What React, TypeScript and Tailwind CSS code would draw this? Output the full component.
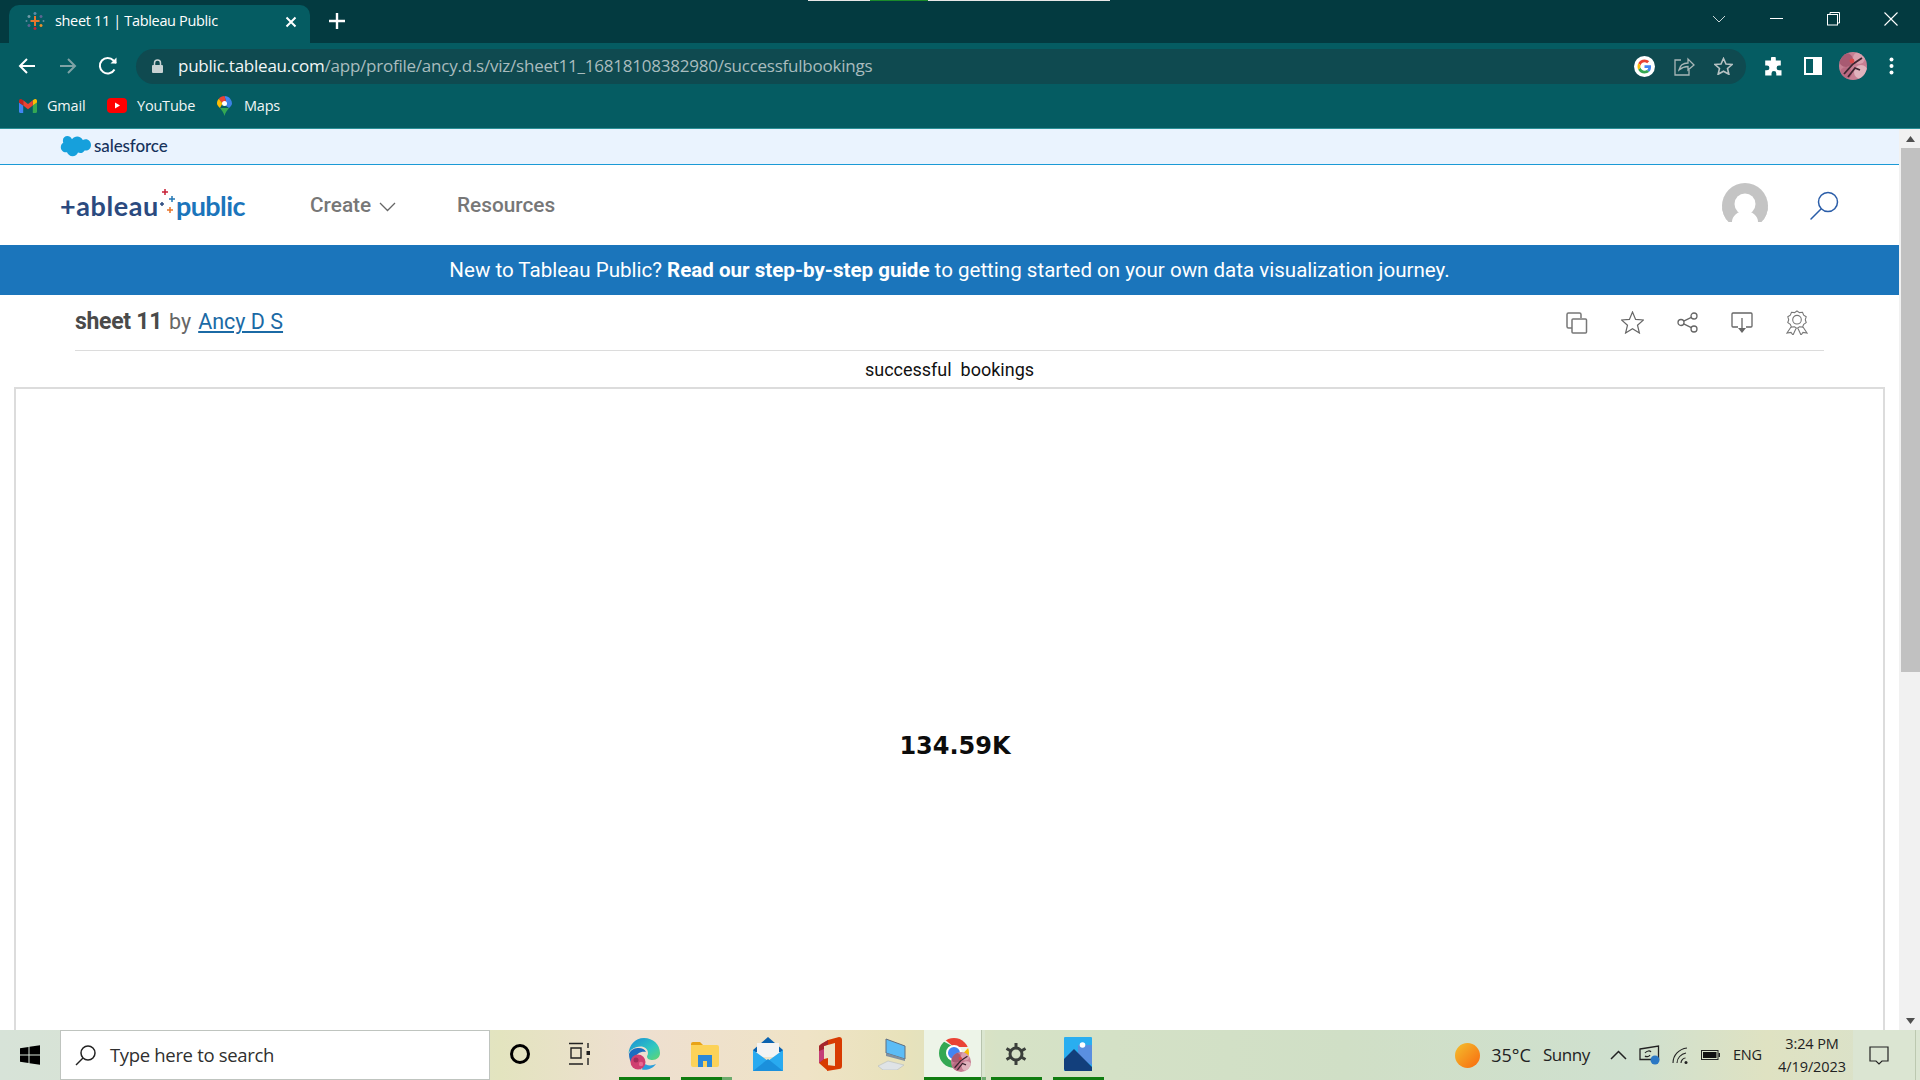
import React from "react";

const seg = "font-['Open_Sans',sans-serif]";

function Favicon() {
  return (
    <svg width="20" height="20" viewBox="0 0 20 20" fill="none" strokeWidth="1.6">
      <path d="M10 5v10M5.500 10h9" stroke="#e8762d" strokeWidth="2" />
      <path d="M10 1v3M8.500 2.500h3" stroke="#5b8aa8" />
      <path d="M10 16v3M8.500 17.500h3" stroke="#c72037" />
      <path d="M4 4v3M2.500 5.500h3" stroke="#7099a6" />
      <path d="M16 4v3M14.500 5.500h3" stroke="#5b6591" />
      <path d="M4 13v3M2.500 14.500h3" stroke="#5b6591" />
      <path d="M16 13v3M14.500 14.500h3" stroke="#eb912b" />
      <path d="M1.500 9v2M18.500 9v2" stroke="#59879b" />
    </svg>
  );
}

function GoogleG({ size = 20 }: { size?: number }) {
  return (
    <svg width={size} height={size} viewBox="0 0 48 48">
      <circle cx="24" cy="24" r="24" fill="#fff" />
      <g transform="translate(8 8) scale(.667)">
        <path fill="#EA4335" d="M24 9.500c3.500 0 6.700 1.300 9.100 3.500l6.800-6.800C35.800 2.400 30.200 0 24 0 14.600 0 6.500 5.400 2.600 13.200l7.900 6.200C12.400 13.700 17.700 9.500 24 9.500z" />
        <path fill="#4285F4" d="M46.500 24.500c0-1.600-.1-3.100-.4-4.500H24v9h12.700c-.6 3-2.200 5.500-4.700 7.200l7.700 6c4.500-4.200 6.800-10.300 6.800-17.700z" />
        <path fill="#FBBC05" d="M10.500 28.600c-.5-1.500-.8-3-.8-4.600s.3-3.100.8-4.600l-7.900-6.200C.9 16.500 0 20.100 0 24s.9 7.500 2.600 10.800l7.900-6.200z" />
        <path fill="#34A853" d="M24 48c6.500 0 11.900-2.100 15.900-5.800l-7.700-6c-2.200 1.400-4.900 2.300-8.200 2.300-6.300 0-11.600-4.200-13.500-9.900l-7.900 6.200C6.500 42.600 14.600 48 24 48z" />
      </g>
    </svg>
  );
}

function Profile({ size, id }: { size: number; id: string }) {
  return (
    <svg width={size} height={size} viewBox="0 0 28 28">
      <clipPath id={id}>
        <circle cx="14" cy="14" r="14" />
      </clipPath>
      <g clipPath={"url(#" + id + ")"}>
        <rect width="28" height="28" fill="#c77f93" />
        <circle cx="7" cy="8" r="7" fill="#a85a72" />
        <circle cx="20" cy="6" r="6" fill="#d9a0ae" />
        <circle cx="22" cy="20" r="7" fill="#e0b3bd" />
        <circle cx="7" cy="21" r="6" fill="#b86a82" />
        <path d="M5 22 14 12l9-6M9 25l7-9 5 2" stroke="#3d2530" strokeWidth="1.800" fill="none" />
        <circle cx="13" cy="9" r="2.400" fill="#d84a4a" />
      </g>
    </svg>
  );
}

function Page() {
  return (
    <div className="flex h-[901px] w-full">
      <div className="flex w-[1899px] flex-col">
        <div className="flex h-[36px] shrink-0 items-center gap-[3px] border-b border-[#1b9ad6] bg-[#eaf3fe] pl-[60px]">
          <svg className="mt-[1px]" width="31" height="23" viewBox="0 0 31 23">
            <path fill="#16a0dc" d="M12 3.200C13.300 1.500 15.200.6 17.200.6c2.400 0 4.500 1.300 5.600 3.300 1-.4 1.900-.6 2.900-.6 3 0 5.300 2.500 5.300 5.600s-2.400 5.600-5.300 5.600c-.4 0-.8 0-1.100-.1-.9 1.600-2.600 2.600-4.400 2.600-.8 0-1.500-.2-2.200-.5-.9 2.200-3 3.700-5.400 3.700-2.600 0-4.800-1.700-5.600-4-.4.1-.7.1-1.100.1C3 16.300.8 14 .8 11.200c0-1.900 1-3.500 2.500-4.400C3 6 2.900 5.200 2.900 4.400 2.900 2 5 .1 7.400.1c1.800 0 3.500 1.100 4.600 3.100z" />
          </svg>
          <span className="pb-[2px] font-['Lato',sans-serif] text-[17px] font-medium tracking-[-0.1px] text-[#16325c]">salesforce</span>
        </div>
        <div className="flex h-[80px] shrink-0 items-center font-['Roboto',sans-serif] text-[20.800px] font-medium text-[#777]">
          <div className="ml-[60px] flex w-[250px] items-center font-['Lato',sans-serif] text-[27px] font-bold leading-none">
            <span className="w-[100px] tracking-[0.6px] text-[#2b4a7f]">+ableau</span>
            <svg className="mb-[8px]" width="16" height="26" viewBox="0 0 16 26" fill="none" strokeWidth="1.500">
              <path d="M5 1v6M2 4h6" stroke="#c72037" />
              <path d="M2 14v4M0 16h4" stroke="#2b4a7f" />
              <path d="M12 8v6M9 11h6" stroke="#2277b4" />
              <path d="M10 19v6M7 22h6" stroke="#e8762d" />
            </svg>
            <span className="tracking-[-0.6px] text-[#1b75bb]">public</span>
          </div>
          <span className="mt-[2px] w-[63px]">Create</span>
          <svg className="ml-[6px] mt-[4px]" width="17" height="10" viewBox="0 0 17 10" fill="none" stroke="#666" strokeWidth="1.300">
            <path d="M1 1l7.500 7.500L16 1" />
          </svg>
          <span className="ml-[61px] mt-[2px]">Resources</span>
          <div className="ml-auto mr-[60px] mt-[2px] flex items-center gap-[41px]">
            <svg width="46" height="46" viewBox="0 0 46 46">
              <defs>
                <clipPath id="av">
                  <circle cx="23" cy="23" r="23" />
                </clipPath>
              </defs>
              <g clipPath="url(#av)">
                <path d="M0 0h46v39H36a13 11 0 0 0-26 0H0z" fill="#c4c4c4" />
                <path d="M6 40 0 46V23zM40 40l6 6V23z" fill="#c4c4c4" />
                <circle cx="23" cy="21" r="10.500" fill="#fff" />
                <rect x="0" y="40" width="46" height="6" fill="#fff" />
              </g>
            </svg>
            <svg width="30" height="30" viewBox="0 0 30 30" fill="none" stroke="#2a5da8" strokeWidth="1.500">
              <circle cx="19" cy="11" r="9.500" />
              <path d="M12 18 2 28" strokeLinecap="round" />
            </svg>
          </div>
        </div>
        <div className="flex h-[50px] shrink-0 items-center justify-center bg-[#1b75bb] font-['Roboto',sans-serif] text-[20.560px] text-white">
          <span>
            New to Tableau Public? <b className="font-bold">Read our step-by-step guide</b> to getting started on your own data visualization journey.
          </span>
        </div>
        <div className="mx-[75px] flex h-[56px] shrink-0 items-center border-b border-[#dcdcdc] font-['Roboto',sans-serif]">
          <span className="text-[23px] font-bold tracking-[-0.3px] text-[#4a4a4a]">sheet 11</span>
          <span className="ml-[7px] text-[21.500px] text-[#666]">by</span>
          <span className="ml-[7px] text-[21.500px] text-[#1b6aa5] underline underline-offset-2">Ancy D S</span>
          <div className="ml-auto mr-[16px] flex items-center gap-[33px]">
            <svg width="22" height="22" viewBox="0 0 22 22" fill="none" stroke="#777" strokeWidth="1.500">
              <path d="M6 16H2.500A1.500 1.500 0 0 1 1 14.500V2.500A1.500 1.500 0 0 1 2.500 1h11A1.500 1.500 0 0 1 15 2.500V6" />
              <rect x="6" y="7" width="14.500" height="14" rx="1" />
            </svg>
            <svg width="23" height="23" viewBox="0 0 23 23" fill="none" stroke="#666" strokeWidth="1.200">
              <path d="M11.500 1l3.100 7.400 7.900.6-6 5.200 1.900 7.800-6.900-4.200L4.600 22l1.900-7.800-6-5.200 7.900-.6z" />
            </svg>
            <svg width="21" height="21" viewBox="0 0 21 21" fill="none" stroke="#666" strokeWidth="1.300">
              <circle cx="17" cy="4" r="3" />
              <circle cx="4" cy="10.500" r="3" />
              <circle cx="17" cy="17" r="3" />
              <path d="M6.700 9.100l7.600-3.700M6.700 11.900l7.600 3.700" />
            </svg>
            <svg width="22" height="22" viewBox="0 0 22 22" fill="none" stroke="#666" strokeWidth="1.300">
              <path d="M7 15H2a1 1 0 0 1-1-1V2a1 1 0 0 1 1-1h18a1 1 0 0 1 1 1v12a1 1 0 0 1-1 1h-5" />
              <path d="M11 6v11" />
              <path d="M7 16h8l-4 5z" fill="#666" stroke="none" />
            </svg>
            <svg width="22" height="25" viewBox="0 0 22 25" fill="none" stroke="#777" strokeWidth="1.100">
              <path d="M11 1l2.500 1.600 3-.3 1.200 2.800 2.500 1.700-.9 2.900.9 2.900-2.500 1.700-1.200 2.800-3-.3L11 18.400l-2.500-1.600-3 .3-1.200-2.800-2.500-1.700.9-2.900-.9-2.900 2.500-1.700 1.200-2.800 3 .3z" />
              <circle cx="11" cy="9.700" r="4.300" />
              <path d="M5 17 1 23l4-.6L7 25l3-6.500M17 17l4 6-4-.6-2 2.600-3-6.500" />
            </svg>
          </div>
        </div>
        <div className="flex h-[36px] shrink-0 items-center justify-center font-['Roboto',sans-serif] text-[18px] text-[#111]">
          <span className="whitespace-pre">successful  bookings</span>
        </div>
        <div className="mx-[14px] flex flex-1 items-center justify-center border-x-2 border-t-2 border-[#dcdcdc] pl-[11px] pt-[72px]">
          <span className="font-['DejaVu_Sans',sans-serif] text-[24px] font-bold text-[#0c0c0c]">134.59K</span>
        </div>
      </div>
      <div className="flex w-[21px] flex-col bg-[#f1f1f1] pl-[2px]">
        <div className="flex h-[19px] items-center justify-center">
          <svg width="9" height="6" viewBox="0 0 9 6"><path d="M4.500 0 9 6H0z" fill="#505050" /></svg>
        </div>
        <div className="h-[524px] bg-[#c1c1c1]" />
        <div className="flex-1" />
        <div className="flex h-[19px] items-center justify-center">
          <svg width="9" height="6" viewBox="0 0 9 6"><path d="M0 0h9L4.500 6z" fill="#505050" /></svg>
        </div>
      </div>
    </div>
  );
}

function Bookmarks() {
  return (
    <div className={"flex h-[39px] items-center pb-[6px] pl-[19px] text-[14.500px] tracking-[-0.2px] text-[#f1f6f6] " + seg}>
      <svg width="18" height="14" viewBox="0 0 18 14">
        <path fill="#4285f4" d="M1.200 14h3V6.600L0 3.500v9.300C0 13.500.5 14 1.200 14z" />
        <path fill="#34a853" d="M13.800 14h3c.7 0 1.200-.5 1.200-1.200V3.500l-4.200 3.100z" />
        <path fill="#fbbc04" d="M13.800 1.300v5.300L18 3.500V1.800c0-1.500-1.700-2.400-3-1.400z" />
        <path fill="#ea4335" d="M4.200 6.600V1.300L9 4.900l4.800-3.600v5.300L9 10.200z" />
        <path fill="#c5221f" d="M0 1.800v1.700l4.200 3.100V1.300L3 .4C1.700-.6 0 .3 0 1.800z" />
      </svg>
      <span className="ml-[10px] w-[39px]">Gmail</span>
      <svg className="ml-[21px]" width="20" height="15" viewBox="0 0 20 15">
        <rect width="20" height="15" rx="4" fill="#f00" />
        <path d="M8 4.500v6l5-3z" fill="#fff" />
      </svg>
      <span className="ml-[10px] w-[58px]">YouTube</span>
      <svg className="ml-[22px]" width="15" height="20" viewBox="0 0 15 20">
        <path fill="#34a853" d="M3 12c1.600 2.200 3.700 4.600 4.500 8 .8-3.400 2.900-5.800 4.500-8z" />
        <path fill="#4285f4" d="M7.500 0c2.300 0 4.300 1 5.700 2.700L9.500 7z" />
        <path fill="#ea4335" d="M1.800 2.700C3.200 1 5.200 0 7.500 0l2 7-4 .5z" />
        <path fill="#fbbc04" d="M1.800 2.700 5.500 7.500 3 12C1 9.800 0 8.800 0 7.400c0-1.800.7-3.500 1.800-4.700z" />
        <path fill="#4285f4" d="M13.200 2.700A7.400 7.400 0 0 1 15 7.400c0 1.400-1 2.400-3 4.600L5.500 7.500z" opacity=".9" />
        <circle cx="7.500" cy="7.400" r="2.500" fill="#fff" />
      </svg>
      <span className="ml-[12px]">Maps</span>
    </div>
  );
}

function Toolbar() {
  return (
    <div className="flex h-[46px] items-center pl-[18px]">
      <svg width="18" height="18" viewBox="0 0 18 18" fill="none" stroke="#fff" strokeWidth="2">
        <path d="M17 9H2M9 2 2 9l7 7" />
      </svg>
      <svg className="ml-[23px]" width="18" height="18" viewBox="0 0 18 18" fill="none" stroke="#7fa3a6" strokeWidth="2">
        <path d="M1 9h15M9 2l7 7-7 7" />
      </svg>
      <svg className="ml-[21px]" width="20" height="20" viewBox="0 0 20 20" fill="none" stroke="#fff" strokeWidth="2">
        <path d="M16.500 13.500A7.800 7.800 0 1 1 15.500 4.500L18 7" />
        <path d="M18.500 1.500v6h-6z" fill="#fff" stroke="none" />
      </svg>
      <div className="ml-[18px] flex h-[35px] w-[1610px] items-center rounded-full bg-[#0f4a50] pl-[16px] pr-[13px]">
        <svg width="11" height="14" viewBox="0 0 11 14">
          <path d="M2.500 6V4a3 3 0 0 1 6 0v2" fill="none" stroke="#c8d2d3" strokeWidth="1.500" />
          <rect y="6" width="11" height="8" rx="1" fill="#c8d2d3" />
        </svg>
        <span className={"ml-[15px] text-[17px] tracking-[-0.23px] text-[#a9bcbe] " + seg}>
          <span className="text-[#f3f7f7]">public.tableau.com</span>/app/profile/ancy.d.s/viz/sheet11_16818108382980/successfulbookings
        </span>
        <div className="ml-auto flex items-center gap-[19px]">
          <GoogleG size={21} />
          <svg width="21" height="19" viewBox="0 0 21 19" fill="none" stroke="#a8b6b7" strokeWidth="1.300">
            <path d="M7 3H1v15h14v-5" />
            <path d="M5 13c1-5 5-7 9-7V2l6 6-6 5V9.500c-3.500 0-6 1-9 3.500z" />
          </svg>
          <svg width="19" height="18" viewBox="0 0 19 18" fill="none" stroke="#b7c2c3" strokeWidth="1.600">
            <path d="M9.500 1.500 12 7l6 .5-4.500 4 1.400 5.800-5.400-3.100-5.400 3.100L5.500 11.500 1 7.500 7 7z" />
          </svg>
        </div>
      </div>
      <svg className="ml-[18px]" width="19" height="19" viewBox="0 0 19 19">
        <path fill="#fff" d="M7 1.500a2.400 2.400 0 0 1 4.800 0V3.500h5v5H15a2.400 2.400 0 0 0 0 4.800h2.500V18.500h-5.200v-2a2.400 2.400 0 0 0-4.800 0v2H1.200v-5.200H3a2.400 2.400 0 0 0 0-4.800H1.200v-5H7z" />
      </svg>
      <svg className="ml-[21px]" width="18" height="18" viewBox="0 0 18 18">
        <path fillRule="evenodd" fill="#fff" d="M0 0h18v18H0zM2 2v14h7V2z" />
      </svg>
      <div className="ml-[17px] shrink-0">
        <Profile size={28} id="pa" />
      </div>
      <svg className="ml-[22px]" width="5" height="18" viewBox="0 0 5 18" fill="#fff">
        <circle cx="2.500" cy="2.500" r="2" />
        <circle cx="2.500" cy="9" r="2" />
        <circle cx="2.500" cy="15.500" r="2" />
      </svg>
    </div>
  );
}

function TabBar() {
  return (
    <div className={"relative flex h-[43px] items-end bg-[#033a40] pl-[9px] text-white " + seg}>
      <div className="absolute left-[808px] top-0 flex h-[1px]">
        <div className="w-[62px] bg-[#e8e8e8]" />
        <div className="w-[58px] bg-[#1a8a2a]" />
        <div className="w-[182px] bg-[#e8e8e8]" />
      </div>
      <div className="flex h-[38px] w-[301px] items-center rounded-t-[10px] bg-[#055c62] pb-[6px] pl-[16px]">
        <Favicon />
        <span className="ml-[10px] text-[14.500px] tracking-[-0.34px]">sheet 11 | Tableau Public</span>
        <svg className="ml-auto mr-[13px] mt-[1px]" width="12" height="12" viewBox="0 0 12 12" stroke="#fff" strokeWidth="2">
          <path d="M1.500 1.500l9 9M10.500 1.500l-9 9" />
        </svg>
      </div>
      <svg className="mb-[14px] ml-[19px]" width="16" height="16" viewBox="0 0 16 16" stroke="#fff" strokeWidth="2.400">
        <path d="M8 0v16M0 8h16" />
      </svg>
      <div className="ml-auto flex h-[43px] items-start pr-[22px] pt-[12px]">
        <svg className="mt-[3px]" width="14" height="8" viewBox="0 0 14 8" fill="none" stroke="#c9d6d7" strokeWidth="1">
          <path d="M1 1l6 6 6-6" />
        </svg>
        <svg className="ml-[44px] mt-[6px]" width="13" height="1" viewBox="0 0 13 1"><rect width="13" height="1" fill="#fff" /></svg>
        <svg className="ml-[44px]" width="13" height="14" viewBox="0 0 13 14" fill="none" stroke="#fff" strokeWidth="1">
          <rect x=".5" y="2.500" width="10" height="10.500" />
          <path d="M3 2.500V.5h9.500v10.500h-2" />
        </svg>
        <svg className="ml-[44px]" width="14" height="14" viewBox="0 0 14 14" stroke="#fff" strokeWidth="1.100">
          <path d="M.5.5l13 13M13.500.5l-13 13" />
        </svg>
      </div>
    </div>
  );
}

function AppIcon({ w, children, active, lineClass, extra }: { w: number; children: React.ReactNode; active?: boolean; lineClass?: string; extra?: React.ReactNode }) {
  return (
    <div style={{ width: w }} className={"relative flex h-[50px] shrink-0 items-center justify-center pb-[2px] " + (active ? "bg-[#edf4e8]" : "")}>
      {children}
      {lineClass ? <div className={"absolute bottom-0 h-[3px] bg-[#107c10] " + lineClass} /> : null}
      {extra}
    </div>
  );
}

function Taskbar() {
  return (
    <div className="flex h-[50px] items-center bg-[linear-gradient(90deg,#d7e3d8_0%,#d9e3cd_20%,#e3e4bf_26%,#eedfd0_33%,#efe3c6_42%,#e8e2bb_47%,#d6e2c6_52%,#d0dfc6_70%,#cfe0cf_85%,#dfe2c2_92%,#d8e1cc_100%)]">
      <div className="flex w-[60px] justify-center">
        <svg width="20" height="20" viewBox="0 0 20 20" fill="#000">
          <path d="M0 3.200 8.500 2v7.500H0zM9.500 1.800 20 .3v9.200H9.500zM0 10.500h8.500V18L0 16.800zM9.500 10.500H20v9.200L9.500 18.200z" />
        </svg>
      </div>
      <div className={"flex h-[50px] w-[430px] shrink-0 items-center border border-[#bfc4bf] bg-white pl-[14px] text-[18.500px] text-[#2f2f2f] " + seg}>
        <svg width="21" height="21" viewBox="0 0 21 21" fill="none" stroke="#222" strokeWidth="1.500">
          <circle cx="13" cy="8" r="7" />
          <path d="M8 13 1 20" />
        </svg>
        <span className="ml-[14px] tracking-[-0.33px]">Type here to search</span>
      </div>
      <AppIcon w={60}>
        <div className="h-[20px] w-[20px] rounded-full border-[3px] border-black" />
      </AppIcon>
      <AppIcon w={60}>
        <svg width="22" height="24" viewBox="0 0 22 24" fill="none" stroke="#222" strokeWidth="1.400">
          <path d="M0 1.500h14M2 6h10v10H2zM0 22h14M19 1v5M19 16v7" />
          <rect x="17.500" y="9" width="3.500" height="4" fill="#222" stroke="none" />
        </svg>
      </AppIcon>
      <AppIcon w={67} lineClass="left-[9px] w-[51px]">
        <svg width="32" height="32" viewBox="0 0 32 32">
          <defs>
            <linearGradient id="edge" x1="0" y1="0" x2="1" y2="1">
              <stop offset="0" stopColor="#1a8dd8" />
              <stop offset=".6" stopColor="#2fc8c0" />
              <stop offset="1" stopColor="#63d66c" />
            </linearGradient>
          </defs>
          <path d="M16 0c9 0 16 6.500 16 15 0 4-3 7-7.500 7-3 0-5.500-1-5.500-3.500 0-1 1-1.500 1-3.500 0-4-3.500-6.500-7.500-6.500C6 9 1.500 12 .5 16 1 7 7 0 16 0z" fill="url(#edge)" />
          <path d="M1 16c2-5 6-6 10-6 3 0 6 1.500 7 4-4-1-11 1-11 8 0 4 2 8 7 9.500C6 31 1 24 1 16z" fill="#1b6dc0" />
          <path d="M14 31.500c5 1 11-1 14-5.500-3 1.500-7 2-10 .5-2-1-3-1.500-4 5z" fill="#2a9fdc" />
          <circle cx="10" cy="24" r="7.500" fill="#cf3f70" />
          <circle cx="8" cy="22" r="2.500" fill="#a02c5a" />
          <circle cx="13" cy="26" r="2.200" fill="#e86a92" />
        </svg>
      </AppIcon>
      <AppIcon w={56} lineClass="left-[4px] w-[41px]" extra={<div className="absolute bottom-0 left-[45px] h-[3px] w-[10px] bg-[#6dab6d]" />}>
        <svg width="28" height="26" viewBox="0 0 28 26">
          <path d="M0 3a2 2 0 0 1 2-2h7l3 3h-12z" fill="#e8a318" />
          <path d="M0 4h26a2 2 0 0 1 2 2v18a2 2 0 0 1-2 2H2a2 2 0 0 1-2-2z" fill="#fcd258" />
          <path d="M7 14h14v12h-5v-6h-4v6H7z" fill="#2b88d8" />
        </svg>
      </AppIcon>
      <AppIcon w={70}>
        <svg width="30" height="34" viewBox="0 0 30 34">
          <path d="M0 13 15 0l15 13v2H0z" fill="#0a62b0" />
          <path d="M4 6h22v14H4z" fill="#f3f3f3" />
          <path d="M0 13l15 11 15-11v21H0z" fill="#29aaf0" />
          <path d="M0 34l15-12 15 12z" fill="#1b90dc" />
        </svg>
      </AppIcon>
      <AppIcon w={54}>
        <svg width="24" height="34" viewBox="0 0 24 34">
          <path d="M10 3 21 0c2 0 3 1 3 3v26c0 2-1 3-3 3L9 34V28l8 1V6L6 9v13l4-1v13L1 26V9z" fill="#d83b01" />
          <path d="M10 3 3 7 1 9v17l5-4V9l4-1.500z" fill="#a4262c" />
          <path d="M1 26V14l5-2v10z" fill="#c43e77" />
        </svg>
      </AppIcon>
      <AppIcon w={67}>
        <svg className="ml-[3px]" width="28" height="32" viewBox="0 0 28 32">
          <path d="M8 1 27 8v13L8 15z" fill="#5cbcf6" stroke="#5f6f80" strokeWidth="1" />
          <path d="M27 21v2l-19-5v-3z" fill="#8090a0" />
          <path d="M0 28 10 23l16 4-7 5H5z" fill="#dfe3e6" stroke="#b6bcc0" strokeWidth=".6" />
        </svg>
      </AppIcon>
      <AppIcon w={57} active lineClass="left-0 w-[57px]">
        <svg className="ml-[4px]" width="32" height="38" viewBox="0 0 32 38">
          <defs>
            <clipPath id="cc"><circle cx="15" cy="18" r="15" /></clipPath>
          </defs>
          <g clipPath="url(#cc)">
            <path d="M0 0h30v12H15z" fill="#ea4335" />
            <path d="M30 12v24H15l4-12z" fill="#fbbc04" />
            <path d="M0 4v32h15l4-12-4-12z" fill="#34a853" />
          </g>
          <circle cx="15" cy="18" r="7" fill="#4285f4" stroke="#fff" strokeWidth="2" />
          <g transform="translate(12 17)">
            <Profile size={20} id="pb" />
          </g>
        </svg>
      </AppIcon>
      <div className="relative h-[50px] w-[4px] shrink-0 border-l border-[#b8c4ae] bg-[#dbe6d0]">
        <div className="absolute bottom-0 h-[3px] w-[4px] bg-[#6dab6d]" />
      </div>
      <AppIcon w={62} lineClass="left-[6px] w-[51px]">
        <svg width="22" height="24" viewBox="0 0 22 24" fill="none" stroke="#3b3f3b" strokeWidth="3">
          <circle cx="11" cy="12" r="6" />
          <path d="M11 1v5M11 18v5M1.500 6.500l4.300 2.500M16.200 15l4.300 2.500M1.500 17.500 5.800 15M16.200 9l4.300-2.500" />
        </svg>
      </AppIcon>
      <AppIcon w={62} lineClass="left-[6px] w-[51px]">
        <svg width="28" height="34" viewBox="0 0 28 34">
          <rect width="28" height="34" rx="1" fill="#29aef0" />
          <path d="M14 8h14v20L14 20z" fill="#5a8fe0" />
          <path d="M0 32V22l10-10 18 18v4H1z" fill="#123f7c" />
          <circle cx="18.500" cy="8" r="2.800" fill="#fff" />
        </svg>
      </AppIcon>
      <div className={"ml-auto flex h-[50px] items-center text-[#222] " + seg}>
        <div className="h-[25px] w-[25px] rounded-full bg-[linear-gradient(135deg,#f3c02e,#f9690e)]" />
        <span className="ml-[11px] text-[18px]">35°C</span>
        <span className="ml-[12px] text-[17px] tracking-[-0.4px]">Sunny</span>
        <svg className="ml-[20px]" width="17" height="10" viewBox="0 0 17 10" fill="none" stroke="#222" strokeWidth="1.500">
          <path d="M1 9l7.500-7.500L16 9" />
        </svg>
        <svg className="ml-[12px]" width="21" height="20" viewBox="0 0 21 20">
          <path d="M1 4 19.500 1v13.500H1z" fill="none" stroke="#222" strokeWidth="1.300" />
          <path d="M6 8c2-2.500 5-2.500 6-1M11 10c-1 2-4 2-5 1" fill="none" stroke="#222" strokeWidth="1.200" />
          <circle cx="16" cy="15" r="4.500" fill="#2b78c4" />
        </svg>
        <svg className="ml-[12px]" width="17" height="17" viewBox="0 0 17 17" fill="none" stroke="#222" strokeWidth="1.100">
          <path d="M1 16C1 8 7 2 15 1M5 16c0-5 4-9 9-10M9 16c0-2.500 2-5 4.500-5" />
          <circle cx="14" cy="15.500" r="1.500" fill="#222" stroke="none" />
        </svg>
        <svg className="ml-[12px]" width="19" height="10" viewBox="0 0 19 10">
          <rect x=".5" y=".5" width="16.500" height="9" fill="none" stroke="#222" />
          <rect x="2" y="2" width="13.500" height="6" fill="#111" />
          <rect x="17.500" y="3" width="1.500" height="4" fill="#222" />
        </svg>
        <span className="ml-[13px] w-[28px] text-[14.500px] tracking-[-0.2px]">ENG</span>
        <div className="ml-[11px] flex w-[80px] flex-col items-center text-[14.500px] leading-[23px] tracking-[-0.1px]">
          <span>3:24 PM</span>
          <span>4/19/2023</span>
        </div>
        <div className="ml-[1px] flex h-[50px] w-[62px] items-center bg-[#dbe5d2] pl-[16px]">
          <svg width="20" height="19" viewBox="0 0 20 19" fill="none" stroke="#222" strokeWidth="1.200">
            <path d="M1 1h18v14h-6l-3 3-3-3H1z" />
          </svg>
        </div>
        <div className="h-[50px] w-[5px] border-l border-[#bcc8b0] bg-[#dbe5d2]" />
      </div>
    </div>
  );
}

export default function App() {
  return (
    <div className="flex h-[1080px] w-[1920px] flex-col overflow-hidden bg-white">
      <TabBar />
      <div className="bg-[#055c62]">
        <Toolbar />
        <Bookmarks />
      </div>
      <div className="h-[1px] bg-[#2b8f96]" />
      <Page />
      <Taskbar />
    </div>
  );
}
